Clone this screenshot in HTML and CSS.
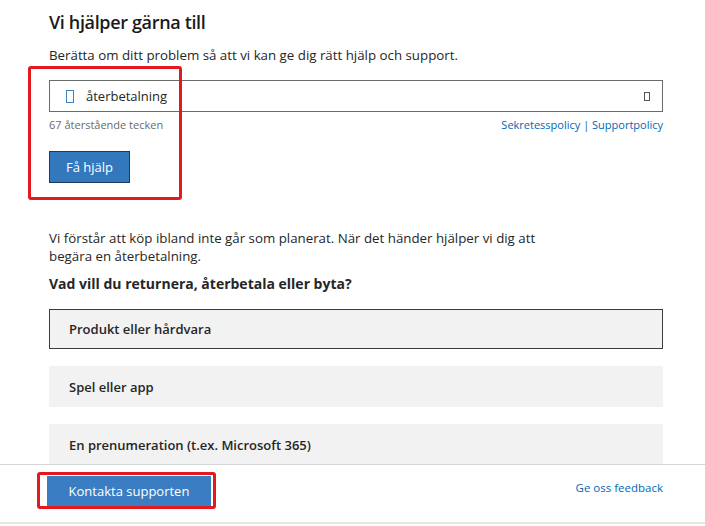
FILE: index.html
```html
<!DOCTYPE html>
<html lang="sv">
<head>
    <meta charset="UTF-8">
    <meta name="viewport" content="width=device-width, initial-scale=1.0">
    <title>Vi hjälper gärna till</title>
    <link rel="stylesheet" href="styles.css">
</head>
<body>
    <div class="page">
        <div class="content">
            <h1 class="title">Vi hjälper gärna till</h1>
            <p class="intro">Berätta om ditt problem så att vi kan ge dig rätt hjälp och support.</p>

            <div class="search-box">
                <span class="glyph glyph-blue"></span>
                <span class="search-text">återbetalning</span>
                <span class="glyph glyph-gray"></span>
            </div>
            <div class="search-meta">
                <span class="remaining">67 återstående tecken</span>
                <span class="policy"><a href="#">Sekretesspolicy</a> | <a href="#">Supportpolicy</a></span>
            </div>
            <button class="btn btn-help">Få hjälp</button>

            <p class="refund-text">Vi förstår att köp ibland inte går som planerat. När det händer hjälper vi dig att begära en återbetalning.</p>
            <p class="question">Vad vill du returnera, återbetala eller byta?</p>

            <div class="options">
                <div class="option selected">Produkt eller hårdvara</div>
                <div class="option">Spel eller app</div>
                <div class="option">En prenumeration (t.ex. Microsoft 365)</div>
            </div>

            <div class="mark mark-search"></div>
        </div>

        <div class="footer">
            <button class="btn btn-contact">Kontakta supporten</button>
            <a href="#" class="feedback">Ge oss feedback</a>
            <div class="mark mark-contact"></div>
        </div>
    </div>
</body>
</html>
```

FILE: styles.css
```css
* {
    margin: 0;
    padding: 0;
    box-sizing: border-box;
}

body {
    background-color: #fff;
    font-family: 'Open Sans', 'Noto Sans', sans-serif;
    color: #262626;
    overflow: hidden;
}

a {
    color: #0067b8;
    text-decoration: none;
}

.page {
    position: relative;
    width: 705px;
    height: 526px;
    display: flex;
    flex-direction: column;
}

.content {
    position: relative;
    height: 465px;
    padding: 9px 42px 0 49px;
    overflow: hidden;
    border-bottom: 1px solid #d6d6d6;
}

.title {
    font-size: 18px;
    font-weight: 600;
    letter-spacing: -0.35px;
    color: #1a1a1a;
    line-height: 26px;
}

.intro {
    margin-top: 10px;
    font-size: 13.3px;
    line-height: 20px;
}

.search-box {
    margin-top: 15px;
    height: 32px;
    border: 1px solid #6b6b6b;
    display: flex;
    align-items: center;
    padding: 0 12px 0 16px;
}

.glyph {
    display: inline-block;
    border: 1px solid;
}

.glyph-blue {
    width: 8px;
    height: 13px;
    border-color: #3b82c4;
}

.glyph-gray {
    width: 6px;
    height: 9px;
    margin-left: auto;
    border-color: #555;
}

.search-text {
    margin-left: 12px;
    font-size: 13px;
}

.search-meta {
    margin-top: 4px;
    display: flex;
    justify-content: space-between;
    font-size: 11px;
    line-height: 18px;
}

.remaining {
    color: #6b6b6b;
}

.policy {
    color: #0067b8;
}

.btn {
    border: 1px solid #1e3a5f;
    background-color: #3378bd;
    color: #fff;
    font-family: inherit;
    font-size: 13px;
    cursor: pointer;
}

.btn-help {
    margin-top: 17px;
    width: 81px;
    height: 32px;
}

.refund-text {
    margin-top: 46px;
    width: 500px;
    font-size: 13.3px;
    line-height: 18px;
}

.question {
    margin-top: 10px;
    font-size: 14px;
    font-weight: 700;
    line-height: 18px;
}

.options {
    margin-top: 16px;
    display: flex;
    flex-direction: column;
    gap: 17px;
}

.option {
    height: 41px;
    background-color: #f2f2f2;
    border: 1px solid #f2f2f2;
    padding: 0 19px;
    display: flex;
    align-items: center;
    font-size: 13px;
    font-weight: 600;
}

.option.selected {
    height: 40px;
    border-color: #3c3c3c;
}

.footer {
    position: relative;
    height: 59px;
    padding: 11px 42px 0 47px;
    display: flex;
    align-items: flex-start;
    justify-content: space-between;
    border-bottom: 2px solid #e6e6e6;
}

.btn-contact {
    width: 164px;
    height: 30px;
    border: none;
    background-color: #3a7dc2;
    font-size: 13px;
}

.feedback {
    margin-top: 4px;
    font-size: 11.5px;
}

.mark {
    position: absolute;
    border: 3px solid #e3191d;
    border-radius: 3px;
}

.mark-search {
    left: 28px;
    top: 66px;
    width: 154px;
    height: 134px;
}

.mark-contact {
    left: 37px;
    top: 7px;
    width: 179px;
    height: 37px;
}
```
